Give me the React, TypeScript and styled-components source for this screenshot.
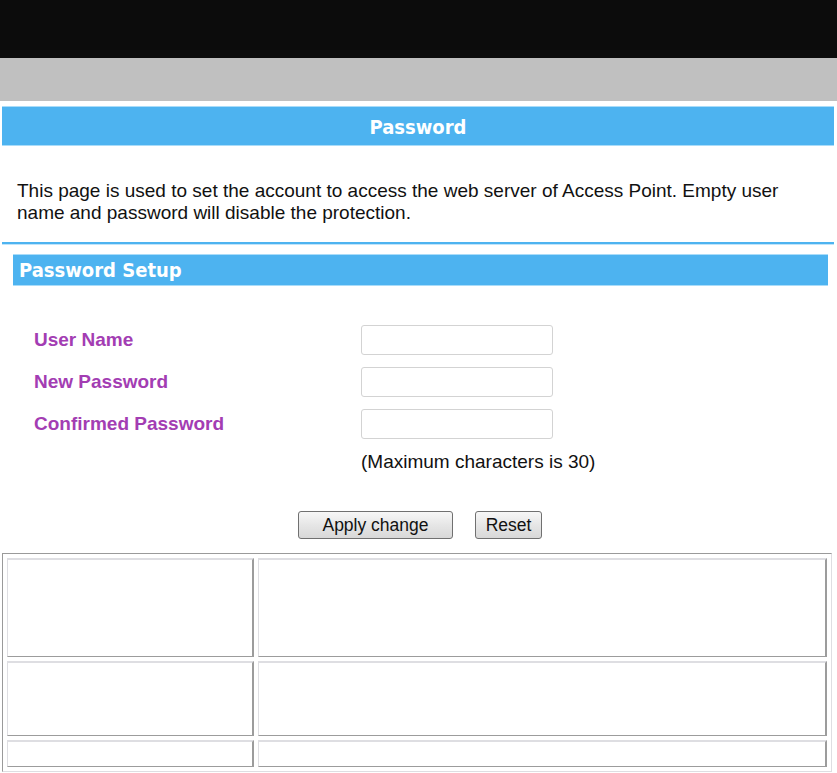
import React from "react";
import styled, { createGlobalStyle } from "styled-components";

const GlobalStyle = createGlobalStyle`
  body {
    margin: 0;
    background: #ffffff;
    font-family: "Liberation Sans", Arial, sans-serif;
  }
`;

const fields = ["User Name", "New Password", "Confirmed Password"];

const App = () => {
  return (
    <>
      <GlobalStyle />
      <TopBar />
      <SubBar />
      <Main>
        <TitleBar>Password</TitleBar>
        <Intro>
          This page is used to set the account to access the web server of
          Access Point. Empty user name and password will disable the
          protection.
        </Intro>
        <Divider />
        <SectionBar>Password Setup</SectionBar>
        <FormGrid>
          {fields.map((label) => (
            <React.Fragment key={label}>
              <Label>{label}</Label>
              <TextInput
                type={label === "User Name" ? "text" : "password"}
                maxLength={30}
              />
            </React.Fragment>
          ))}
        </FormGrid>
        <Hint>(Maximum characters is 30)</Hint>
        <ButtonRow>
          <Button type="button" $width={155}>
            Apply change
          </Button>
          <Button type="reset" $width={67}>
            Reset
          </Button>
        </ButtonRow>
        <InfoTable>
          <tbody>
            {[99, 75, 27].map((h, i) => (
              <tr key={i}>
                <Cell $height={h} $first />
                <Cell $height={h} />
              </tr>
            ))}
          </tbody>
        </InfoTable>
      </Main>
    </>
  );
};

export default App;

const TopBar = styled.div`
  height: 58px;
  background: #0c0c0c;
`;

const SubBar = styled.div`
  height: 43px;
  background: #c0c0c0;
`;

const Main = styled.div`
  padding: 5px 3px 0 2px;
`;

const TitleBar = styled.div`
  box-sizing: border-box;
  height: 40px;
  background: #4db3f0;
  border-top: 1px solid #a9dcf9;
  border-bottom: 1px solid #a9dcf9;
  color: #ffffff;
  font-family: "DejaVu Sans Condensed", "DejaVu Sans", sans-serif;
  font-stretch: condensed;
  font-weight: bold;
  font-size: 20px;
  text-align: center;
  line-height: 40px;
`;

const Intro = styled.p`
  margin: 34px 0 0;
  padding: 0 20px 0 15px;
  font-size: 19px;
  color: #111111;
`;

const Divider = styled.div`
  margin-top: 18px;
  height: 2px;
  background: #4db3f0;
  box-shadow: 0 1px 0 #bfe4fa;
`;

const SectionBar = styled.div`
  box-sizing: border-box;
  margin: 10px 6px 0 11px;
  height: 32px;
  padding-left: 6px;
  background: #4db3f0;
  border-top: 1px solid #a9dcf9;
  border-bottom: 1px solid #a9dcf9;
  color: #ffffff;
  font-family: "DejaVu Sans Condensed", "DejaVu Sans", sans-serif;
  font-stretch: condensed;
  font-weight: bold;
  font-size: 20px;
  line-height: 31px;
`;

const FormGrid = styled.div`
  display: grid;
  grid-template-columns: 327px 192px;
  grid-auto-rows: 30px;
  row-gap: 12px;
  align-items: center;
  margin-top: 39px;
  padding-left: 32px;
`;

const Label = styled.span`
  color: #a33db3;
  font-weight: bold;
  font-size: 19px;
`;

const TextInput = styled.input`
  box-sizing: border-box;
  width: 192px;
  height: 30px;
  margin: 0;
  border: 1px solid #d3d3d3;
  border-radius: 3px;
  background: #ffffff;
  font-size: 16px;
  outline: none;
`;

const Hint = styled.div`
  margin-top: 12px;
  padding-left: 359px;
  font-size: 19px;
  color: #111111;
`;

const ButtonRow = styled.div`
  display: flex;
  justify-content: center;
  gap: 22px;
  margin-top: 38px;
  padding-left: 4px;
`;

const Button = styled.button<{ $width: number }>`
  box-sizing: border-box;
  width: ${(p) => p.$width}px;
  height: 28px;
  padding: 0;
  border: 1px solid #707070;
  border-radius: 3px;
  background: linear-gradient(#f7f7f7, #e6e6e6 50%, #d8d8d8);
  color: #111111;
  font-family: "Liberation Sans", Arial, sans-serif;
  font-size: 17.5px;
`;

const InfoTable = styled.table`
  box-sizing: border-box;
  width: 830px;
  margin-top: 14px;
  border-collapse: separate;
  border-spacing: 4px;
  border-style: solid;
  border-width: 1px;
  border-color: #9a9a9a #dedee2 #dedee2 #9a9a9a;
`;

const Cell = styled.td<{ $height: number; $first?: boolean }>`
  box-sizing: border-box;
  height: ${(p) => p.$height}px;
  width: ${(p) => (p.$first ? "247px" : "auto")};
  padding: 0;
  border-style: solid;
  border-width: 2px 2px 1px 1px;
  border-color: #dedee2 #9c9c9c #9c9c9c #dedee2;
`;
